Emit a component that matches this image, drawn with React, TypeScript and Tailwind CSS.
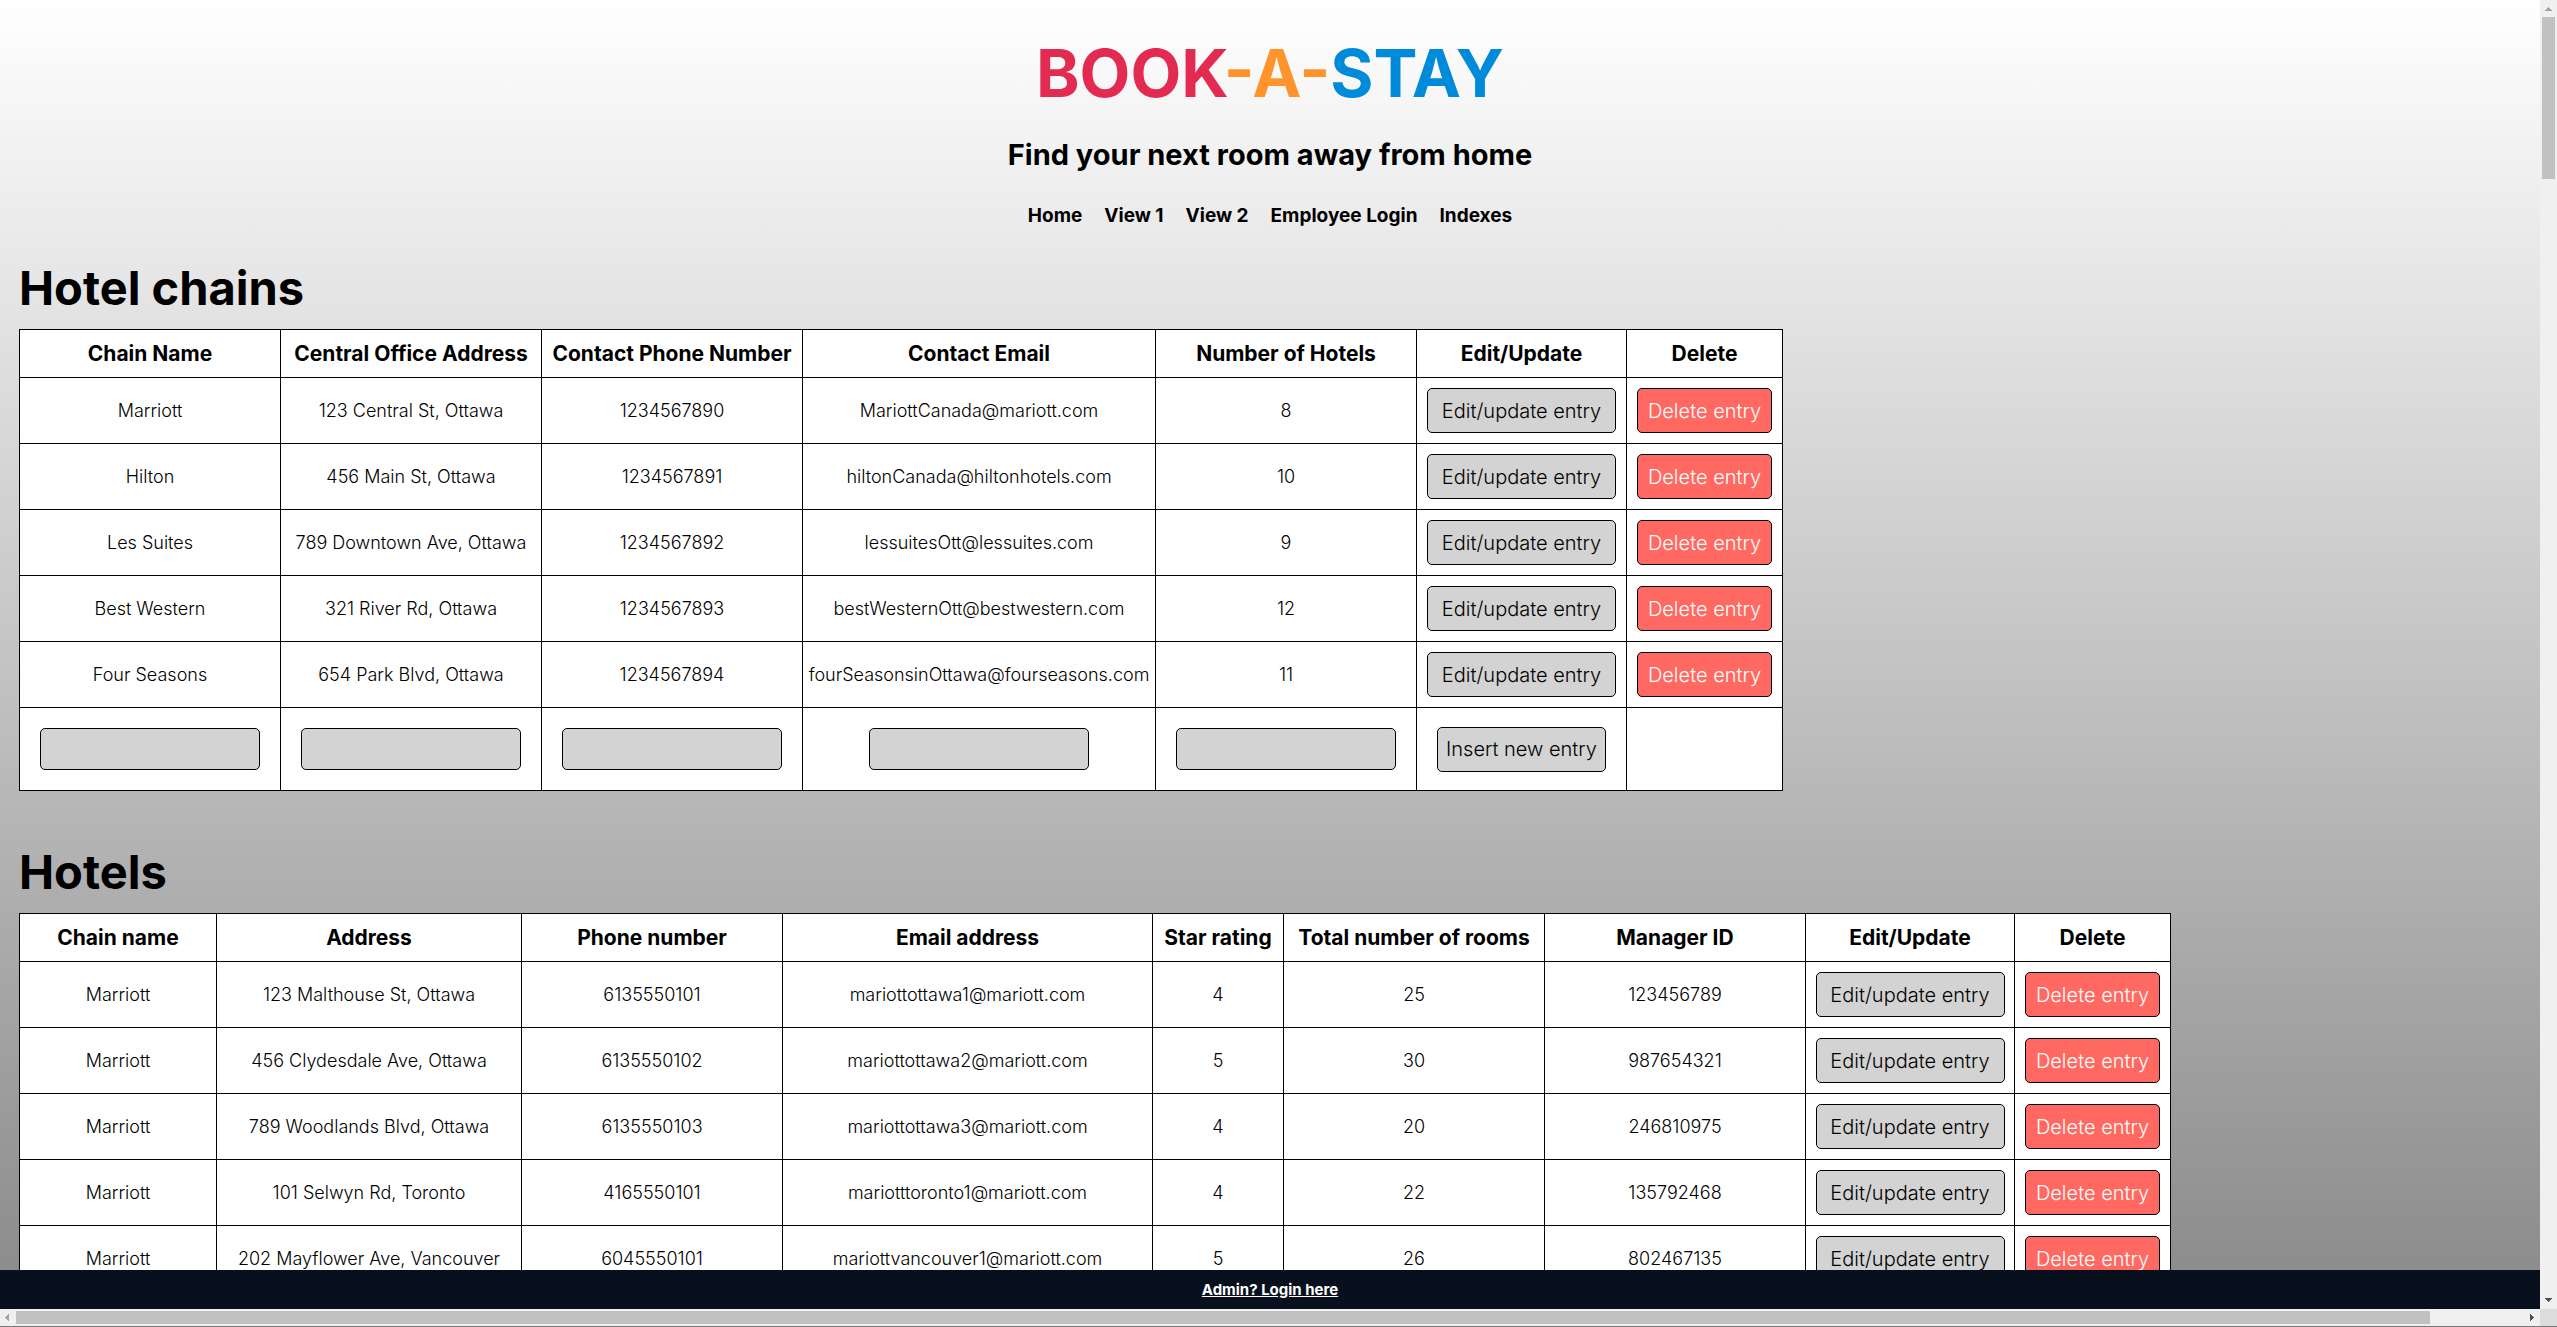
import type { ReactNode } from "react";

const chainColumns = [
  "Chain Name",
  "Central Office Address",
  "Contact Phone Number",
  "Contact Email",
  "Number of Hotels",
];

const chains = [
  ["Marriott", "123 Central St, Ottawa", "1234567890", "MariottCanada@mariott.com", "8"],
  ["Hilton", "456 Main St, Ottawa", "1234567891", "hiltonCanada@hiltonhotels.com", "10"],
  ["Les Suites", "789 Downtown Ave, Ottawa", "1234567892", "lessuitesOtt@lessuites.com", "9"],
  ["Best Western", "321 River Rd, Ottawa", "1234567893", "bestWesternOtt@bestwestern.com", "12"],
  ["Four Seasons", "654 Park Blvd, Ottawa", "1234567894", "fourSeasonsinOttawa@fourseasons.com", "11"],
];

const hotelColumns = [
  "Chain name",
  "Address",
  "Phone number",
  "Email address",
  "Star rating",
  "Total number of rooms",
  "Manager ID",
];

const hotels = [
  ["Marriott", "123 Malthouse St, Ottawa", "6135550101", "mariottottawa1@mariott.com", "4", "25", "123456789"],
  ["Marriott", "456 Clydesdale Ave, Ottawa", "6135550102", "mariottottawa2@mariott.com", "5", "30", "987654321"],
  ["Marriott", "789 Woodlands Blvd, Ottawa", "6135550103", "mariottottawa3@mariott.com", "4", "20", "246810975"],
  ["Marriott", "101 Selwyn Rd, Toronto", "4165550101", "mariotttoronto1@mariott.com", "4", "22", "135792468"],
  ["Marriott", "202 Mayflower Ave, Vancouver", "6045550101", "mariottvancouver1@mariott.com", "5", "26", "802467135"],
];

const navLinks = ["Home", "View 1", "View 2", "Employee Login", "Indexes"];

const buttonBase = "h-[45px] rounded-[5px] border border-black text-xl font-light whitespace-nowrap";

function EditButton() {
  return <button type="button" className={`${buttonBase} w-[189px] bg-[#d3d3d3] text-black`}>Edit/update entry</button>;
}

function DeleteButton() {
  return <button type="button" className={`${buttonBase} w-[135px] bg-[#ff6961] text-white`}>Delete entry</button>;
}

function HeaderRow({ columns }: { columns: string[] }) {
  return (
    <thead>
      <tr className="h-12">
        {[...columns, "Edit/Update", "Delete"].map((label) => (
          <th key={label} scope="col" className="border border-black p-0 text-[21px] leading-6 font-bold whitespace-nowrap">
            {label}
          </th>
        ))}
      </tr>
    </thead>
  );
}

function DataRow({ cells }: { cells: string[] }) {
  return (
    <tr className="h-[66px]">
      {cells.map((cell, i) => (
        <td key={i} className="border border-black p-0 text-lg leading-6 font-light whitespace-nowrap">
          {cell}
        </td>
      ))}
      <td className="border border-black p-0 align-middle">
        <div className="flex justify-center"><EditButton /></div>
      </td>
      <td className="border border-black p-0 align-middle">
        <div className="flex justify-center"><DeleteButton /></div>
      </td>
    </tr>
  );
}

function SectionTitle({ children }: { children: ReactNode }) {
  return <h2 className="mb-[11px] text-[47px] leading-[60px] font-bold">{children}</h2>;
}

function ChainsTable() {
  return (
    <table className="w-[1764px] table-fixed border-collapse bg-white text-center">
      <colgroup>
        <col className="w-[261px]" />
        <col className="w-[261px]" />
        <col className="w-[261px]" />
        <col className="w-[353px]" />
        <col className="w-[261px]" />
        <col className="w-[210px]" />
        <col className="w-[156px]" />
      </colgroup>
      <HeaderRow columns={chainColumns} />
      <tbody>
        {chains.map((row) => (
          <DataRow key={row[0]} cells={row} />
        ))}
        <tr className="h-[83px]">
          {chainColumns.map((label) => (
            <td key={label} className="border border-black p-0">
              <div className="flex justify-center">
                <input
                  type="text"
                  aria-label={label}
                  className="h-[42px] w-[220px] rounded-[5px] border border-black bg-[#d3d3d3] px-2 text-lg font-light"
                />
              </div>
            </td>
          ))}
          <td className="border border-black p-0">
            <div className="flex justify-center">
              <button type="button" className={`${buttonBase} w-[169px] bg-[#d3d3d3] text-black`}>Insert new entry</button>
            </div>
          </td>
          <td className="border border-black p-0" />
        </tr>
      </tbody>
    </table>
  );
}

function HotelsTable() {
  return (
    <table className="w-[2152px] table-fixed border-collapse bg-white text-center">
      <colgroup>
        <col className="w-[197px]" />
        <col className="w-[305px]" />
        <col className="w-[261px]" />
        <col className="w-[370px]" />
        <col className="w-[131px]" />
        <col className="w-[261px]" />
        <col className="w-[261px]" />
        <col className="w-[209px]" />
        <col className="w-[156px]" />
      </colgroup>
      <HeaderRow columns={hotelColumns} />
      <tbody>
        {hotels.map((row) => (
          <DataRow key={row[6]} cells={row} />
        ))}
      </tbody>
    </table>
  );
}

function VerticalScrollbar() {
  return (
    <div className="flex w-[17px] shrink-0 flex-col items-center bg-[#f0f0f0]">
      <svg width="17" height="17" viewBox="0 0 17 17" shapeRendering="crispEdges" className="shrink-0">
        <path d="M5 11h7v-1h-1v-1h-1v-1h-1v-1h-1v1h-1v1h-1v1h-1z" fill="#a3a3a3" />
      </svg>
      <div className="h-[162px] w-[13px] bg-[#c1c1c1]" />
      <svg width="17" height="17" viewBox="0 0 17 17" shapeRendering="crispEdges" className="mt-auto shrink-0">
        <path d="M5 6h7v1h-1v1h-1v1h-1v1h-1v-1h-1v-1h-1v-1h-1z" fill="#505050" />
      </svg>
    </div>
  );
}

function HorizontalScrollbar() {
  return (
    <div className="flex h-[18px] shrink-0 border-b border-[#777777] bg-[#f0f0f0]">
      <div className="flex grow items-center">
        <svg width="16" height="17" viewBox="0 0 16 17" shapeRendering="crispEdges" className="shrink-0">
          <path d="M9 5v7h-1v-1h-1v-1h-1v-1h-1v-1h1v-1h1v-1h1v-1z" fill="#a3a3a3" />
        </svg>
        <div className="grow">
          <div className="h-[13px] w-[96.3%] bg-[#c1c1c1]" />
        </div>
        <svg width="17" height="17" viewBox="0 0 17 17" shapeRendering="crispEdges" className="shrink-0">
          <path d="M7 5v7h1v-1h1v-1h1v-1h1v-1h-1v-1h-1v-1h-1v-1z" fill="#505050" />
        </svg>
      </div>
      <div className="w-[17px] shrink-0 bg-[#dcdcdc]" />
    </div>
  );
}

export default function App() {
  return (
    <div className="flex h-screen flex-col overflow-hidden font-[Inter,sans-serif] text-black">
      <div className="flex min-h-0 grow">
        <div className="flex min-w-0 grow flex-col bg-linear-to-b/srgb from-white to-[#898989]">
          <main className="min-h-0 grow basis-0 overflow-hidden">
            <header className="flex flex-col items-center pt-[33px]">
              <h1 className="text-[66px] leading-[80px] font-bold">
                <span className="text-[#e32b52]">BOOK</span>
                <span className="text-[#ff942d]">-A-</span>
                <span className="text-[#008ada]">STAY</span>
              </h1>
              <p className="mt-6 text-[29px] leading-9 font-bold">Find your next room away from home</p>
              <nav className="mt-7 flex gap-[22px] text-[19px] leading-[30px] font-bold">
                {navLinks.map((label) => (
                  <a key={label} href="#">{label}</a>
                ))}
              </nav>
            </header>
            <section className="mt-[27px] pl-[19px]">
              <SectionTitle>Hotel chains</SectionTitle>
              <ChainsTable />
            </section>
            <section className="mt-[51px] pl-[19px]">
              <SectionTitle>Hotels</SectionTitle>
              <HotelsTable />
            </section>
          </main>
          <footer className="flex h-[39px] shrink-0 items-center justify-center bg-[#080f1d]">
            <a href="#" className="text-[15px] leading-6 font-bold text-white underline">Admin? Login here</a>
          </footer>
        </div>
        <VerticalScrollbar />
      </div>
      <HorizontalScrollbar />
    </div>
  );
}
